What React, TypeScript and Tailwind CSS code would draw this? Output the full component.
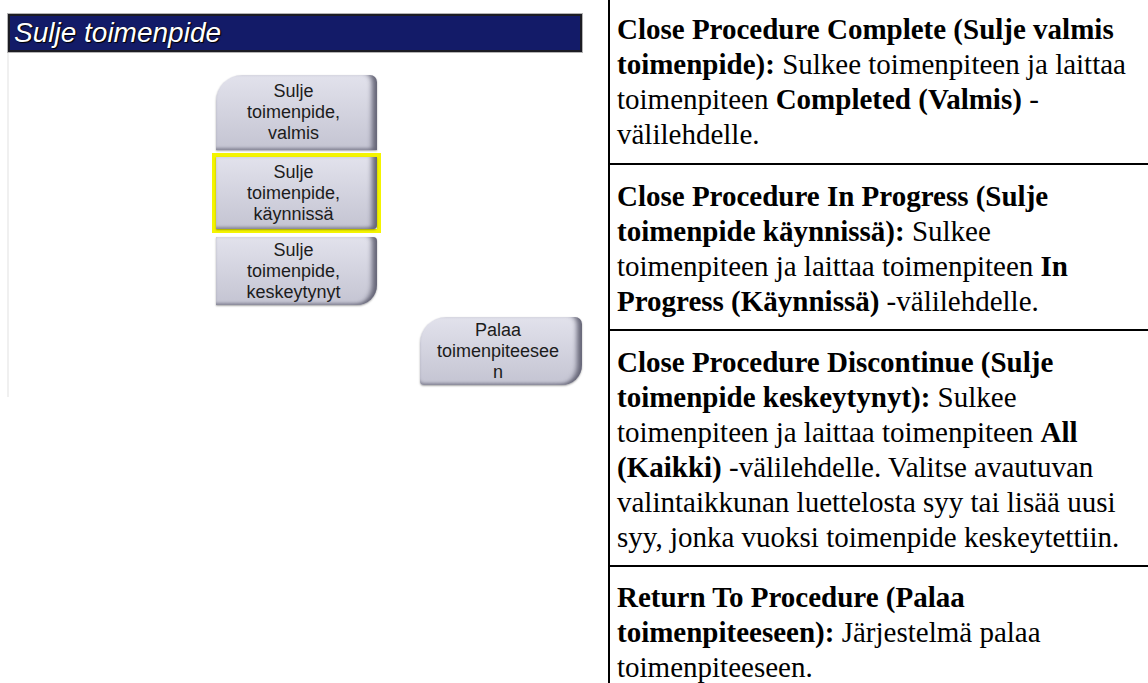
import React from "react";

function Btn({
  lines,
  shape,
}: {
  lines: string[];
  shape: string;
}) {
  return (
    <div
      className={`flex h-full w-full flex-col items-center justify-center bg-linear-to-b from-[#e2e2ec] to-[#c4c4d2] pr-[6px] font-['Liberation_Sans',Arial,sans-serif] text-[18px] leading-[21px] text-[#1c1c1c] shadow-[inset_-8px_0_5px_-3px_#676778,inset_0_-3px_3px_-1px_#8c8c9c,0_1px_2px_rgba(0,0,0,0.35)] ${shape}`}
    >
      {lines.map((l, i) => (
        <div key={i} className="whitespace-nowrap">
          {l}
        </div>
      ))}
    </div>
  );
}

function Cell({ children, kind }: { children: React.ReactNode; kind: "first" | "mid" | "last" }) {
  const cls =
    kind === "first"
      ? "border-b-2 border-black pl-[7px] pt-[12px] pb-[11px]"
      : kind === "mid"
      ? "border-b-2 border-black pl-[7px] pt-[14px] pb-[10px]"
      : "pl-[7px] pt-[13px] pb-[4px]";
  return <div className={cls}>{children}</div>;
}

function L({ children }: { children: React.ReactNode }) {
  return <div className="whitespace-nowrap leading-[35px]">{children}</div>;
}

export default function App() {
  return (
    <div className="flex h-[683px] w-[1148px] overflow-hidden bg-white">
      {/* Left: screenshot area */}
      <div className="w-[608px] shrink-0 pl-[7px] pt-[13px]">
        <div className="h-[40px] w-[576px] border border-[#b4b4b4]">
          <div className="flex h-full items-center border-2 border-[#1c1c24] bg-[#131b68] pl-[4px]">
            <span className="font-['Liberation_Sans',Arial,sans-serif] text-[28px] italic leading-none text-white [text-shadow:0_0_1px_#000,1px_1px_1px_#000]">
              Sulje toimenpide
            </span>
          </div>
        </div>
        <div className="flex h-[344px] flex-col border-l-2 border-[#f0f0f0] pt-[22px]">
          <div className="ml-[207px] h-[75px] w-[161px]">
            <Btn shape="rounded-tl-[26px] rounded-tr-[7px]" lines={["Sulje", "toimenpide,", "valmis"]} />
          </div>
          <div className="ml-[203px] mt-[3px] h-[80px] w-[169px] border-4 border-[#f4f400]">
            <Btn shape="rounded-br-[4px]" lines={["Sulje", "toimenpide,", "käynnissä"]} />
          </div>
          <div className="ml-[207px] mt-[4px] h-[68px] w-[161px]">
            <Btn shape="rounded-tr-[4px] rounded-br-[20px]" lines={["Sulje", "toimenpide,", "keskeytynyt"]} />
          </div>
          <div className="ml-[411px] mt-[12px] h-[68px] w-[162px]">
            <Btn
              shape="rounded-tl-[26px] rounded-tr-[7px] rounded-br-[20px] rounded-bl-[4px]"
              lines={["Palaa", "toimenpiteesee", "n"]}
            />
          </div>
        </div>
      </div>

      {/* Right: description table */}
      <div className="flex-1 border-l-2 border-black font-['Liberation_Serif','Times_New_Roman',serif] text-[29px] text-black">
        <Cell kind="first">
          <L>
            <b>Close Procedure Complete (Sulje valmis</b>
          </L>
          <L>
            <b>toimenpide):</b> Sulkee toimenpiteen ja laittaa
          </L>
          <L>
            toimenpiteen <b>Completed (Valmis)</b> -
          </L>
          <L>välilehdelle.</L>
        </Cell>
        <Cell kind="mid">
          <L>
            <b>Close Procedure In Progress (Sulje</b>
          </L>
          <L>
            <b>toimenpide käynnissä):</b> Sulkee
          </L>
          <L>
            toimenpiteen ja laittaa toimenpiteen <b>In</b>
          </L>
          <L>
            <b>Progress (Käynnissä)</b> -välilehdelle.
          </L>
        </Cell>
        <Cell kind="mid">
          <L>
            <b>Close Procedure Discontinue (Sulje</b>
          </L>
          <L>
            <b>toimenpide keskeytynyt):</b> Sulkee
          </L>
          <L>
            toimenpiteen ja laittaa toimenpiteen <b>All</b>
          </L>
          <L>
            <b>(Kaikki)</b> -välilehdelle. Valitse avautuvan
          </L>
          <L>valintaikkunan luettelosta syy tai lisää uusi</L>
          <L>syy, jonka vuoksi toimenpide keskeytettiin.</L>
        </Cell>
        <Cell kind="last">
          <L>
            <b>Return To Procedure (Palaa</b>
          </L>
          <L>
            <b>toimenpiteeseen):</b> Järjestelmä palaa
          </L>
          <L>toimenpiteeseen.</L>
        </Cell>
      </div>
    </div>
  );
}
